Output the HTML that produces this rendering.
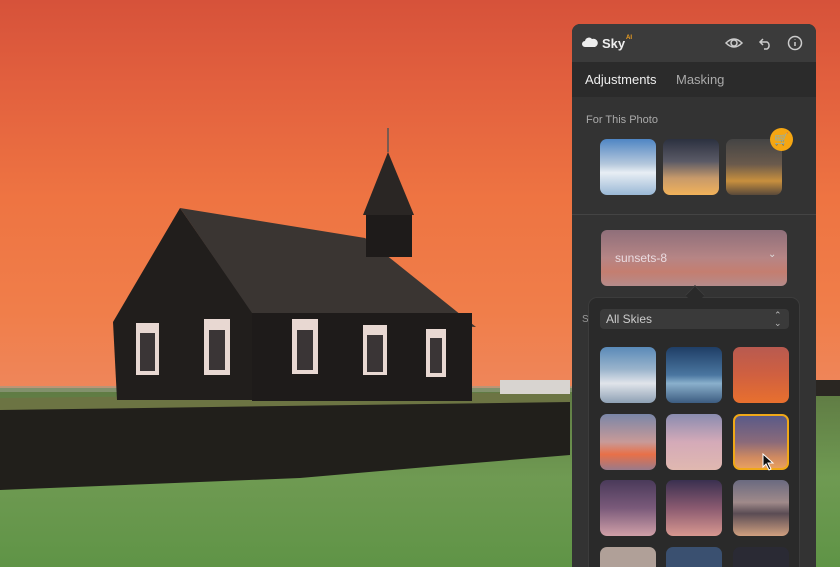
<!DOCTYPE html>
<html style="width:840px;height:567px;overflow:hidden"><head><meta charset="utf-8"><style>
*{margin:0;padding:0;box-sizing:border-box}
body{width:840px;height:567px;overflow:hidden;position:relative;font-family:"Liberation Sans",sans-serif;
background:linear-gradient(180deg,#d6523a 0%,#e2603e 15%,#ee7442 35%,#f07e4a 55%,#ee8a62 75%,#e8a090 100%);}
.abs{position:absolute}
.panel{left:572px;top:24px;width:244px;height:560px;background:#333;border-radius:8px;overflow:hidden}
.hdr{left:0;top:0;width:244px;height:38px;background:#3b3b3b}
.tabs{left:0;top:38px;width:244px;height:35px;background:#2b2b2b}
.t{color:#ddd;font-size:13px}
.th{position:absolute;width:56px;height:56px;border-radius:7px}
.pop{left:588px;top:297px;width:212px;height:290px;background:#2a2a2a;border-radius:9px;border:1px solid #3c3c3c}
</style></head><body>
<svg class="abs" style="left:0;top:0" width="840" height="567">
<defs><linearGradient id="gr" x1="0" y1="0" x2="0" y2="1"><stop offset="0" stop-color="#5f7a43"/><stop offset=".5" stop-color="#6f9a52"/><stop offset="1" stop-color="#5f9446"/></linearGradient></defs>
<rect x="0" y="388" width="840" height="179" fill="url(#gr)"/>
<rect x="0" y="386" width="840" height="6" fill="#9aa089" opacity=".6"/>
<path d="M0 403 L100 400 L300 398 L570 397 L570 455 L450 465 L300 478 L150 484 L0 490Z" fill="#211f1b"/>
<path d="M0 398 L570 392 L570 402 L0 410Z" fill="#6c7443"/>
<path d="M113 322 L180 208 L252 312 L252 400 L117 400Z" fill="#211e1c"/>
<path d="M180 208 L365 238 L476 327 L252 313Z" fill="#3a3532"/>
<rect x="252" y="313" width="220" height="88" fill="#1e1b1a"/>
<rect x="366" y="212" width="46" height="45" fill="#1e1b1a"/>
<path d="M363 215 L388 152 L414 215Z" fill="#2a2624"/>
<line x1="388" y1="152" x2="388" y2="128" stroke="#555" stroke-width="1.5"/>
<g fill="#e8d8d2">
<rect x="136" y="323" width="23" height="52"/><rect x="204" y="319" width="26" height="56"/><rect x="292" y="319" width="26" height="55"/><rect x="363" y="325" width="24" height="50"/><rect x="426" y="329" width="20" height="48"/>
</g>
<g fill="#3a3536">
<rect x="140" y="333" width="15" height="38"/><rect x="209" y="330" width="16" height="40"/><rect x="297" y="330" width="16" height="40"/><rect x="367" y="335" width="16" height="37"/><rect x="430" y="338" width="12" height="35"/>
</g>
<rect x="500" y="380" width="70" height="14" fill="#d8d4d0"/>
<rect x="816" y="380" width="24" height="16" fill="#2a2622"/>
</svg>
<div class="abs panel">
<div class="abs hdr">
<svg class="abs" style="left:10px;top:13px" width="16" height="11"><path d="M3 10 A3 3 0 0 1 3 4 A4 4 0 0 1 10 2 A3.5 3.5 0 0 1 13 10Z" fill="#eee"/></svg>
<div class="abs t" style="left:30px;top:12px;font-size:13px;font-weight:bold;color:#eee">Sky</div>
<div class="abs" style="left:54px;top:11px;font-size:6px;color:#f0a020;font-weight:bold">AI</div>
<svg class="abs" style="left:152px;top:11px" width="80" height="16" fill="none" stroke="#ccc" stroke-width="1.5">
<path d="M2 8 Q10 0 18 8 Q10 16 2 8Z"/><circle cx="10" cy="8" r="3"/>
<path d="M39 4 L36 7 L39 10 M36 7 H43 A4 4 0 0 1 43 14 H40"/>
<circle cx="71" cy="8" r="6.5"/><path d="M71 7 V11 M71 4.5 V5"/>
</svg>
</div>
<div class="abs tabs">
<div class="abs t" style="left:13px;top:10px;color:#eee">Adjustments</div>
<div class="abs t" style="left:104px;top:10px;color:#aaa">Masking</div>
</div>
<div class="abs" style="left:14px;top:90px;font-size:11px;color:#aaa">For This Photo</div>
<div class="abs" style="left:0;top:190px;width:244px;height:1px;background:#444"></div>
<div class="abs" style="left:29px;top:206px;width:186px;height:56px;border-radius:6px;background:linear-gradient(180deg,#8f6f7a,#b68585 50%,#c47e70 75%,#b58b8b)">
<div class="abs" style="left:14px;top:21px;font-size:12px;color:#eadbe0">sunsets-8</div>
<div class="abs" style="left:167px;top:19px;font-size:10px;color:#ddd">⌄</div></div>
<div class="abs" style="left:10px;top:290px;font-size:10px;color:#999">S</div>
</div>
<div class="th abs" style="left:600px;top:139px;background:linear-gradient(180deg,#4f86c4,#b5c8dc 45%,#e8eef4 60%,#9ab8d6)"></div>
<div class="th abs" style="left:663px;top:139px;background:linear-gradient(180deg,#2c3140,#5a5a66 40%,#c89a6a 70%,#f2b25a)"></div>
<div class="th abs" style="left:726px;top:139px;background:linear-gradient(180deg,#444,#6a5a4c 45%,#c8903e 75%,#5a4a3a)"></div>
<div class="abs" style="left:770px;top:128px;width:23px;height:23px;border-radius:50%;background:#f5a612;color:#fff;font-size:12px;text-align:center;line-height:23px">🛒</div>
<div class="abs pop">
<div class="abs" style="left:11px;top:11px;width:189px;height:20px;background:#3a3a3a;border-radius:4px">
<div class="abs" style="left:6px;top:3px;font-size:12px;color:#ccc">All Skies</div>
<div class="abs" style="left:174px;top:2px;font-size:9px;color:#bbb;line-height:8px">⌃<br>⌄</div></div>
</div>
<div class="abs" style="left:688px;top:288px;width:14px;height:14px;background:#2a2a2a;border-left:1px solid #3c3c3c;border-top:1px solid #3c3c3c;transform:rotate(45deg)"></div>
<div class="th abs" style="left:600px;top:347px;background:linear-gradient(180deg,#5a8ab8,#9ab4cc 40%,#e0e4ea 65%,#8ea0b4)"></div>
<div class="th abs" style="left:666px;top:347px;background:linear-gradient(180deg,#1f3e66,#4a76a0 50%,#8ab0cc 65%,#3c5c80)"></div>
<div class="th abs" style="left:733px;top:347px;background:linear-gradient(180deg,#b85a50,#d06040 50%,#e8702e)"></div>
<div class="th abs" style="left:600px;top:414px;background:linear-gradient(180deg,#7a86a8,#c89a98 50%,#e87048 72%,#9a7a8a)"></div>
<div class="th abs" style="left:666px;top:414px;background:linear-gradient(180deg,#8a8cb0,#d4aab8 50%,#e0b8b0)"></div>
<div class="th abs" style="left:733px;top:414px;border:2px solid #f0a818;background:linear-gradient(180deg,#5a5a88,#8a6a7a 50%,#d08a60 80%,#e8a060)"></div>
<div class="th abs" style="left:600px;top:480px;background:linear-gradient(180deg,#4a3a5a,#7a5a7a 50%,#d0a0a8)"></div>
<div class="th abs" style="left:666px;top:480px;background:linear-gradient(180deg,#3a3050,#8a5a70 50%,#d89890)"></div>
<div class="th abs" style="left:733px;top:480px;background:linear-gradient(180deg,#6a6a80,#a08a8a 40%,#5a4c54 60%,#d0a080)"></div>
<div class="th abs" style="left:600px;top:547px;height:20px;border-radius:7px 7px 0 0;background:#b0a098"></div>
<div class="th abs" style="left:666px;top:547px;height:20px;border-radius:7px 7px 0 0;background:#3a5070"></div>
<div class="th abs" style="left:733px;top:547px;height:20px;border-radius:7px 7px 0 0;background:#2a2a34"></div>
<svg class="abs" style="left:762px;top:453px" width="14" height="18"><path d="M1 1 L1 14 L4 11 L7 17 L9 16 L6 10 L11 10Z" fill="#111" stroke="#fff" stroke-width="1"/></svg>
</body></html>
